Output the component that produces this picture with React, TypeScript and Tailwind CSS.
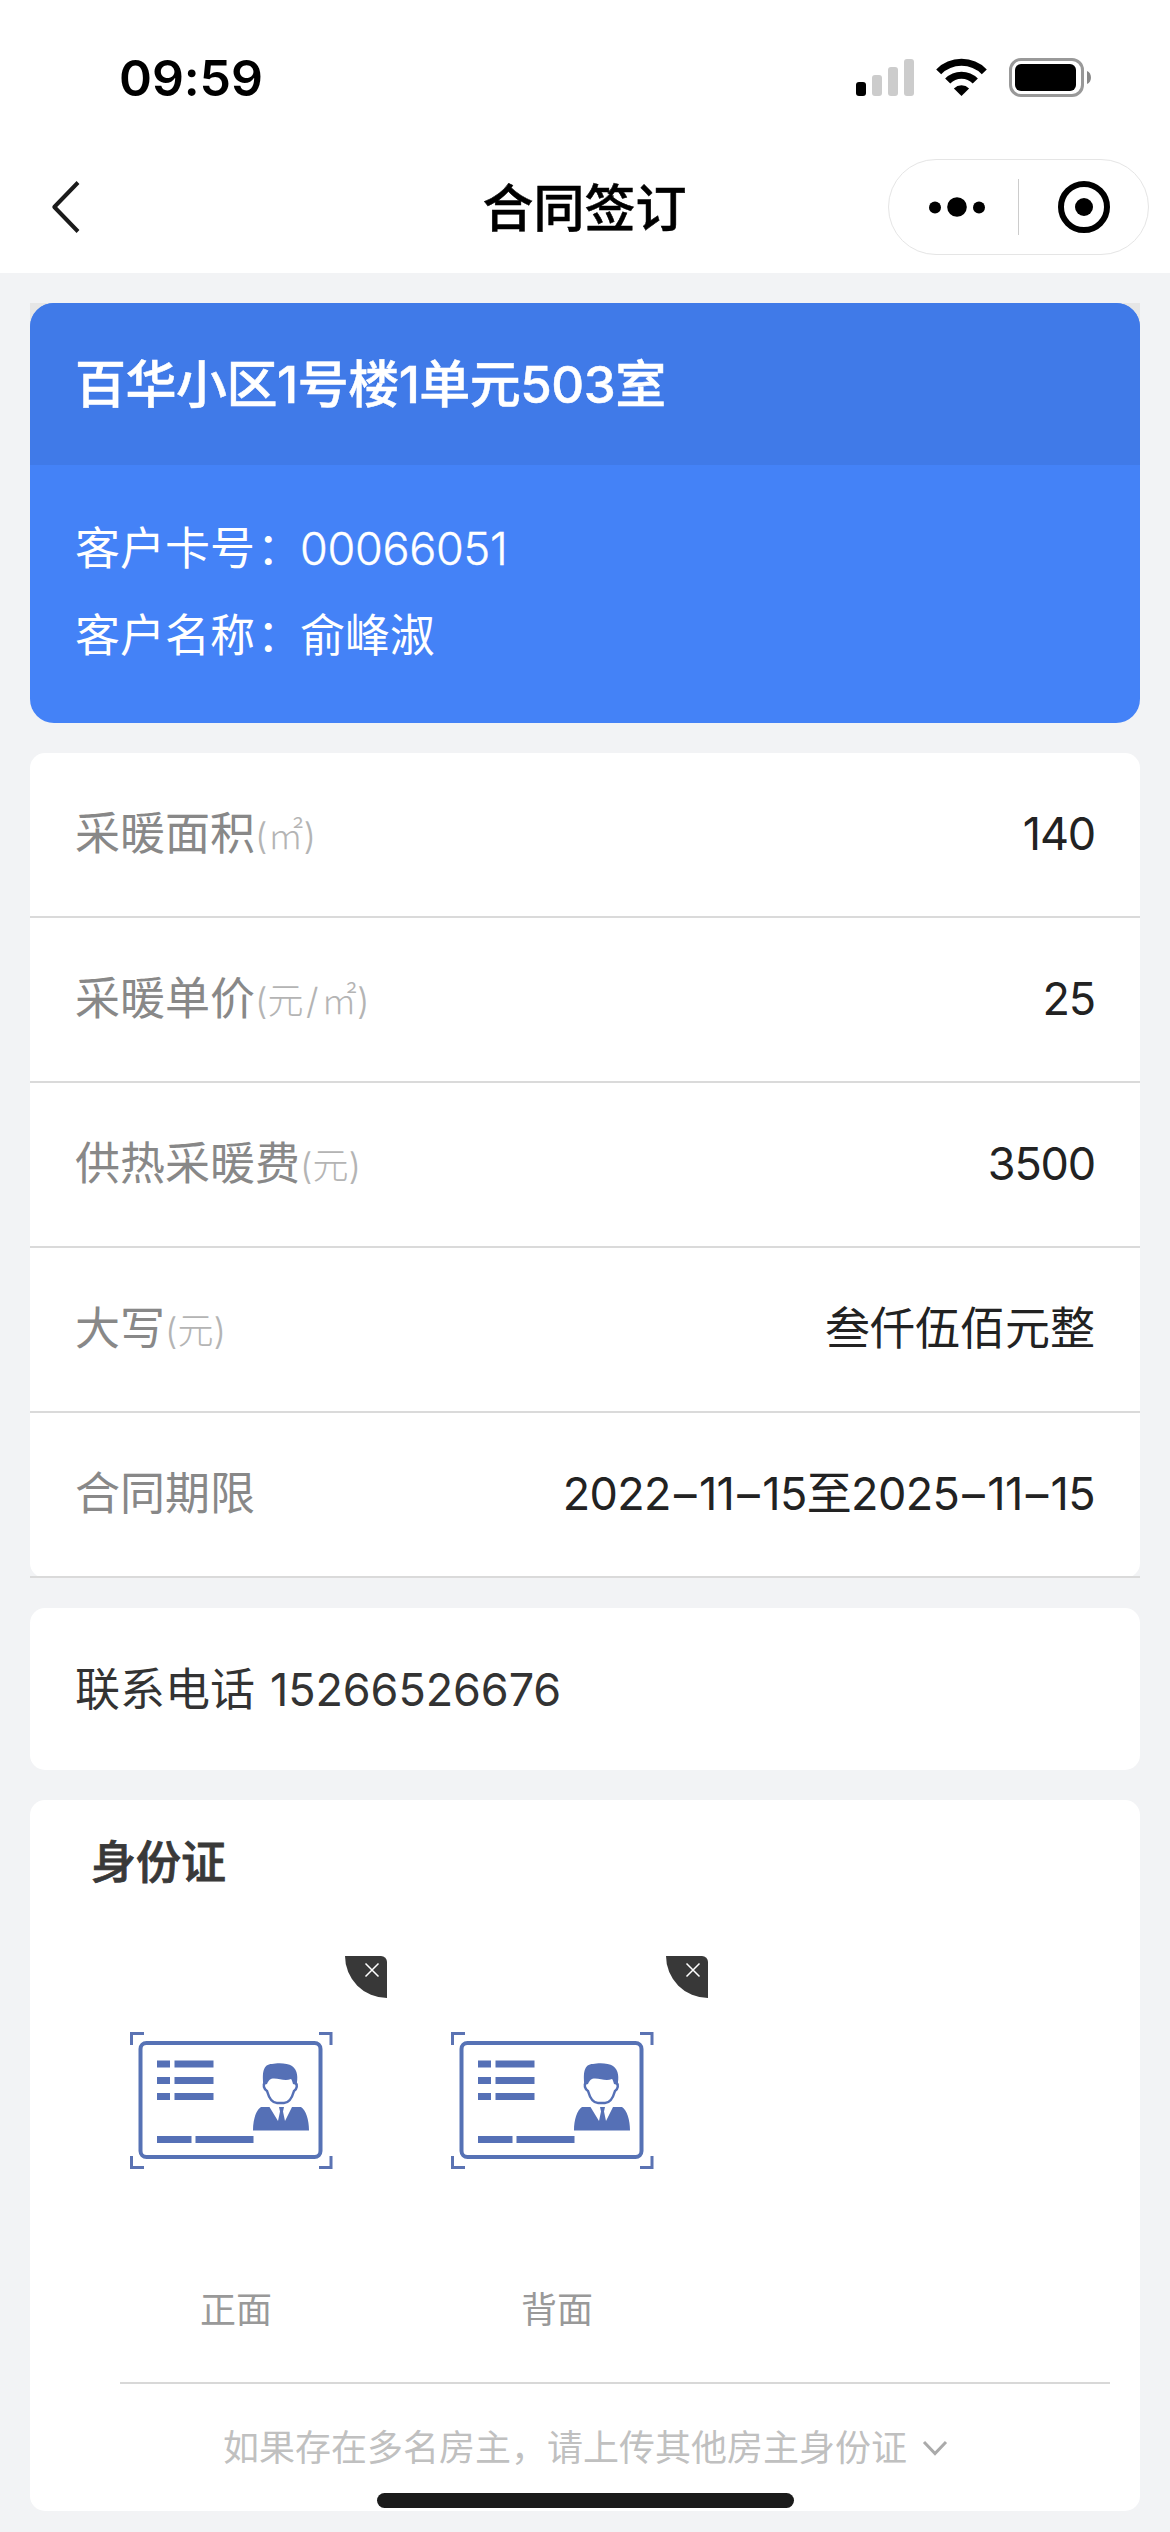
import type { ReactNode } from "react";

function StatusBar() {
  return (
    <div className="flex h-[141px] items-start justify-between pl-[119px] pr-[78px]">
      <div className="mt-[48px] text-[50px] font-semibold leading-[60px] tracking-[-0.1px] text-black">09:59</div>
      <div className="mt-[57px] flex items-start">
        <svg width="60" height="41" viewBox="0 0 60 41">
          <rect x="1" y="25" width="10" height="14" rx="3" fill="#000" />
          <rect x="17" y="18" width="10" height="21" rx="3" fill="#ccc" />
          <rect x="33" y="10" width="10" height="29" rx="3" fill="#ccc" />
          <rect x="49" y="2" width="10" height="37" rx="3" fill="#ccc" />
        </svg>
        <svg className="ml-[21px]" width="51" height="41" viewBox="0 0 51 41">
          <path d="M2.7 14.9A32 32 0 0 1 48.3 14.9" fill="none" stroke="#000" strokeWidth="7" />
          <path d="M11.7 24A19.4 19.4 0 0 1 39.3 24" fill="none" stroke="#000" strokeWidth="7.2" />
          <path d="M25.5 39L17.9 31.4A11 11 0 0 1 33.1 31.4Z" fill="#000" />
        </svg>
        <svg className="ml-[21px]" width="84" height="41" viewBox="0 0 84 41">
          <rect x="2.5" y="2.5" width="72" height="36" rx="10.5" fill="none" stroke="#999" strokeWidth="3" />
          <rect x="7" y="7" width="61" height="27" rx="6" fill="#000" />
          <path d="M79 14C84.3 16 84.3 25 79 27Z" fill="#888" />
        </svg>
      </div>
    </div>
  );
}

function NavBar() {
  return (
    <div className="grid h-[132px] grid-cols-[1fr_auto_1fr] items-center">
      <svg className="ml-[50px]" width="32" height="54" viewBox="0 0 32 54">
        <path d="M28 2.5L4.3 27L28 51.5" fill="none" stroke="#1b1b1b" strokeWidth="4" strokeLinejoin="round" />
      </svg>
      <h1 className="-ml-px pt-[3px] text-[51px] font-medium leading-[60px] text-black [-webkit-text-stroke:0.5px_black]">合同签订</h1>
      <div className="mr-[21px] flex h-[96px] w-[261px] items-center justify-self-end rounded-full border border-[#e5e5e5]">
        <svg className="ml-[35px]" width="70" height="24" viewBox="0 0 70 24">
          <circle cx="11" cy="12.5" r="6" />
          <circle cx="33" cy="12" r="9.8" />
          <circle cx="55" cy="12.5" r="6" />
        </svg>
        <div className="ml-[24px] h-[56px] w-px bg-[#ccc]" />
        <svg className="ml-[39px]" width="52" height="52" viewBox="0 0 52 52">
          <circle cx="26" cy="26" r="23" fill="none" stroke="#000" strokeWidth="6" />
          <circle cx="26" cy="26" r="9" />
        </svg>
      </div>
    </div>
  );
}

function CustomerCard() {
  return (
    <section className="bg-[linear-gradient(#e6e6e6_40px,#f2f3f5_40px)]">
      <div className="h-[420px] overflow-hidden rounded-[24px] bg-[#4482f7] text-white">
        <div className="flex h-[162px] items-center bg-[#407ae8] px-[45px] pt-[2px] text-[51px] font-medium">
          <span className="tracking-[-0.5px] [-webkit-text-stroke:0.5px_white]">百华小区1号楼1单元503室</span>
        </div>
        <div className="flex flex-col gap-[21px] px-[45px] pt-[51px] text-[45px] leading-[66px]">
          <p className="flex">
            客户卡号<span className="relative left-[2px]">：</span>
            <span className="font-light tracking-[-0.3px] [-webkit-text-stroke:0.4px_white]">00066051</span>
          </p>
          <p className="flex">
            客户名称<span className="relative left-[2px]">：</span>俞峰淑
          </p>
        </div>
      </div>
    </section>
  );
}

function Dash() {
  return <span className="mx-[3px]">–</span>;
}

const rows: { label: string; unit?: ReactNode; value: ReactNode }[] = [
  { label: "采暖面积", unit: "(㎡)", value: <span className="tracking-[-1.2px]">140</span> },
  {
    label: "采暖单价",
    unit: (
      <>
        (元<span className="mx-[2.5px]">/</span>㎡)
      </>
    ),
    value: <span className="tracking-[-1.2px]">25</span>,
  },
  { label: "供热采暖费", unit: "(元)", value: <span className="tracking-[-1.2px]">3500</span> },
  { label: "大写", unit: "(元)", value: "叁仟伍佰元整" },
  {
    label: "合同期限",
    value: (
      <span className="tracking-[-0.6px]">
        2022
        <Dash />
        11
        <Dash />
        15至2025
        <Dash />
        11
        <Dash />
        15
      </span>
    ),
  },
];

function ContractDetails() {
  return (
    <section className="mt-[30px] h-[825px] rounded-[15px] bg-white">
      {rows.map((row) => (
        <div
          key={row.label}
          className="flex h-[165px] items-center justify-between border-b-2 border-[#dadada] px-[45px] pb-[1px] text-[45px]"
        >
          <div className="flex items-baseline text-[#888]">
            {row.label}
            <span className="relative -top-px text-[36px] font-light text-[#b4b4b4]">{row.unit}</span>
          </div>
          <div className="text-[#222]">{row.value}</div>
        </div>
      ))}
    </section>
  );
}

function IdCardIcon() {
  return (
    <svg width="204" height="140" viewBox="0 0 204 140" fill="none">
      <g stroke="#5b73b3" strokeWidth="3">
        <path d="M1.5 14V2.5H14M189 2.5H201V14M201 125V136.5H189M14 136.5H1.5V125" />
        <rect x="10.5" y="12" width="180" height="114" rx="6" stroke="#5672b5" strokeWidth="4" />
      </g>
      <g fill="#5570b6">
        <path d="M27 29.5h13v7H27zM44.500 29.500h39v7h-39zM27 46h13v7H27zM44.500 46h39v7h-39zM27 62h13v7H27zM44.500 62h39v7h-39zM27 105h34.500v7H27zM65.500 105h58v7h-58z" />
        <path d="M133.500 54C132 42 133 33 142 33C148 31.500 158 32 162 35C168 39 168 47 166.500 54L163 53C162 50 162 49 161 48C155 50.500 150 47.500 144 47.500C140 47.500 139 49 137 53Z" />
        <path d="M123 99.500C123 89 126 79 131 76H139.500L148 90L150 80.500L149 76H154L153 80.500L155 90L162 76H171C176 79 179 89 179 99.500Z" />
      </g>
      <path d="M135 51C132.500 54 134 58 137 60C139 67 142 72 147 72H154C159 72 162 67 164 60C167 58 168 54 165 51" stroke="#5570b6" strokeWidth="2.500" />
    </svg>
  );
}

function IdPhoto({ caption }: { caption: string }) {
  return (
    <div className="relative h-[380px] w-[321px]">
      <div className="absolute right-[54px] top-0 h-[42px] w-[42px] rounded-bl-[42px] rounded-tr-[6px] bg-[#383838]">
        <svg className="ml-[19px] mt-[6px]" width="16" height="16" viewBox="0 0 16 16">
          <path d="M1.500 1.500L14.500 14.500M14.500 1.500L1.500 14.500" stroke="#fff" strokeWidth="1.500" />
        </svg>
      </div>
      <div className="ml-[10px] mt-[75px]">
        <IdCardIcon />
      </div>
      <p className="ml-[80px] mt-[112px] text-[36px] leading-[54px] text-[#999]">{caption}</p>
    </div>
  );
}

function Card({ className, children }: { className: string; children: ReactNode }) {
  return <section className={`mt-[30px] rounded-[15px] bg-white ${className}`}>{children}</section>;
}

export default function App() {
  return (
    <div className="relative h-[2532px] w-[1170px] overflow-hidden bg-[#f2f3f5] font-['Inter','Noto_Sans_CJK_SC',sans-serif]">
      <header className="bg-white">
        <StatusBar />
        <NavBar />
      </header>
      <main className="px-[30px] pt-[30px]">
        <CustomerCard />
        <ContractDetails />
        <Card className="flex h-[162px] items-center px-[45px] pt-px text-[45px] text-[#333]">
          <span>联系电话</span>
          <span className="ml-[15px] tracking-[-0.1px]">15266526676</span>
        </Card>
        <Card className="flex h-[711px] flex-col">
          <h2 className="ml-[61px] mt-[32px] text-[45px] font-medium leading-[62px] text-[#393939] [-webkit-text-stroke:0.8px_#393939]">身份证</h2>
          <div className="ml-[90px] mt-[62px] flex">
            <IdPhoto caption="正面" />
            <IdPhoto caption="背面" />
          </div>
          <div className="ml-[90px] mr-[30px] mt-[46px] h-[2px] bg-[#d8d8d8]" />
          <div className="ml-[193px] mt-[37px] flex items-center text-[36px] leading-[54px] text-[#c0c0c0]">
            如果存在多名房主，请上传其他房主身份证
            <svg className="ml-[15px]" width="26" height="18" viewBox="0 0 26 18">
              <path d="M2 3L13 14.500L24 3" fill="none" stroke="#aaa" strokeWidth="3" />
            </svg>
          </div>
        </Card>
      </main>
      <div className="absolute bottom-[24px] left-[377px] h-[15px] w-[417px] rounded-full bg-[#1b1b1b]" />
    </div>
  );
}
